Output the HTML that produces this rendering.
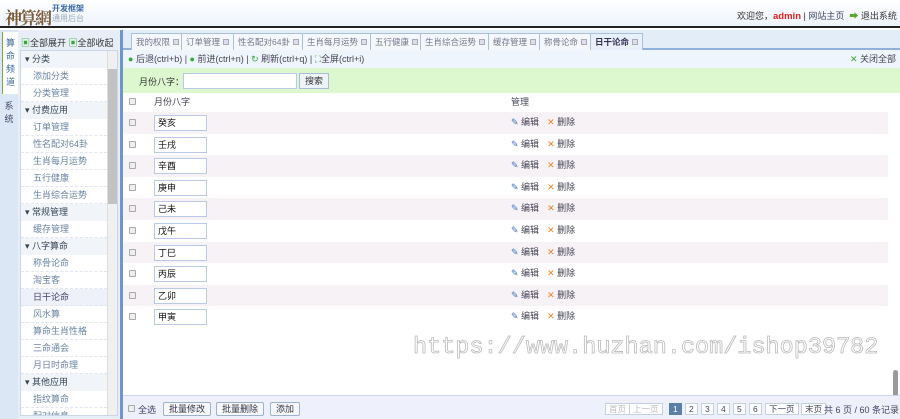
<!DOCTYPE html>
<html><head><meta charset="utf-8"><style>
*{margin:0;padding:0;box-sizing:border-box}
body{width:900px;height:419px;overflow:hidden;position:relative;font:9px "Liberation Sans","Noto Sans CJK SC",sans-serif;color:#333;background:#fff}
.a{position:absolute}
.hdr{left:0;top:0;width:900px;height:28px;background:linear-gradient(#fff,#eef4fb);border-bottom:2px solid #222}
.vt{left:0;top:30px;width:18px;height:389px;background:#dbe7f4}
.side{left:18px;top:30px;width:102px;height:389px;background:#e7eef8}
.tree{left:20px;top:50px;width:98px;height:366px;background:#fff;border:1px solid #c9d6e6;overflow:hidden}
.tree div{height:17px;line-height:17px;padding-left:12px;color:#6a84a6;border-bottom:1px dashed #e0e6ee}
.tree div.h{padding-left:4px;color:#345;background:#f1f5fa;border-bottom:none}
.sep{left:120px;top:30px;width:3px;height:389px;background:#6f96c8}
.tabs{left:123px;top:30px;width:777px;height:20px;background:#e3edf8;border-bottom:2px solid #8fb0d8}
.tab{position:absolute;top:3px;height:17px;line-height:16px;border:1px solid #a9c0dc;border-bottom:none;background:#f4f8fc;color:#778;padding:0 4px;font-size:8.5px;white-space:nowrap}
.tab i{display:inline-block;width:6px;height:6px;border:1px solid #aab;background:#dde;margin-left:3px;vertical-align:0}
.tb{left:123px;top:50px;width:777px;height:18px;background:#eff5fc;line-height:18px;color:#445}
.srch{left:123px;top:68px;width:777px;height:25px;background:#ddf8cf}
.th{left:123px;top:93px;width:777px;height:18px;background:#fff;line-height:18px}
.row{position:absolute;left:123px;width:765px;height:21.6px}
.cb{position:absolute;width:7px;height:7px;border:1px solid #aaa;border-radius:1px;background:#eee}
.inp{position:absolute;left:31px;top:3px;width:53px;height:16px;border:1px solid #b9c9e6;background:#fff;line-height:14px;padding-left:3px;color:#111}
.ops{position:absolute;left:388px;top:0;line-height:21px;color:#445}
.ops b{color:#3b74c4;font-weight:normal}
.ops em{color:#f08020;font-style:normal;margin-left:8px}
.bot{left:123px;top:395px;width:777px;height:24px;background:#eef0fb;border-top:1px solid #cdd6ee}
.btn{position:absolute;top:6px;height:14px;line-height:12px;border:1px solid #9db2d0;border-radius:2px;background:#f6f8fc;padding:0 5px;color:#334}
.pg{position:absolute;top:7px;height:12px;line-height:11px;border:1px solid #c3d0e5;background:#fff;padding:0 3px;color:#446;font-size:8.5px}
</style></head><body>
<div class="a hdr">
 <div class="a" style="left:5px;top:4px;font:bold 17px 'Noto Serif CJK SC',serif;color:#7a5a3a;letter-spacing:-2px">神算網</div>
 <div class="a" style="left:52px;top:3px;font-size:8px;color:#3a6ab0;font-weight:bold">开发框架</div>
 <div class="a" style="left:52px;top:13px;font-size:8px;color:#9ab">通用后台</div>
 <div class="a" style="left:737px;top:9px;color:#333">欢迎您，<b style="color:#d22;font-size:9.5px">admin</b> | <span style="color:#446">网站主页</span> &nbsp;<span style="color:#5a3">➡</span> 退出系统</div>
</div>
<div class="a vt">
 <div class="a" style="left:2px;top:2px;width:16px;height:62px;background:#fff;border-left:1px solid #7a4;color:#3a6a9a;font-size:9px;line-height:13px;text-align:center;padding-top:5px">算<br>命<br>频<br>道</div>
 <div class="a" style="left:2px;top:70px;width:14px;color:#446;line-height:13px;text-align:center">系<br>统</div>
</div>
<div class="a side">
 <div class="a" style="left:3px;top:6px;color:#333;white-space:nowrap"><span style="color:#3a3;font-weight:bold">▣</span>全部展开 <span style="color:#3a3;font-weight:bold">▣</span>全部收起</div>
</div>
<div class="a tree">
 <div class="h">▾ 分类</div><div>添加分类</div><div>分类管理</div>
 <div class="h">▾ 付费应用</div><div>订单管理</div><div>性名配对64卦</div><div>生肖每月运势</div><div>五行健康</div><div>生肖综合运势</div>
 <div class="h">▾ 常规管理</div><div>缓存管理</div>
 <div class="h">▾ 八字算命</div><div>称骨论命</div><div>淘宝客</div><div style="background:#eef0fa;color:#446">日干论命</div><div>风水算</div><div>算命生肖性格</div><div>三命通会</div><div>月日时命理</div>
 <div class="h">▾ 其他应用</div><div>指纹算命</div><div>配对信息</div>
 <div class="a" style="left:86px;top:0;width:11px;height:366px;background:#f0f0f0;border-left:1px solid #ddd;padding:0;border-bottom:none"></div>
 <div class="a" style="left:87px;top:18px;width:9px;height:135px;background:#c2c2c2;padding:0;border:none"></div>
</div>
<div class="a sep"></div>
<div class="a tabs">
 <div class="tab" style="left:8px">我的权限<i></i></div>
 <div class="tab" style="left:58px">订单管理<i></i></div>
 <div class="tab" style="left:110px">性名配对64卦<i></i></div>
 <div class="tab" style="left:179px">生肖每月运势<i></i></div>
 <div class="tab" style="left:247px">五行健康<i></i></div>
 <div class="tab" style="left:297px">生肖综合运势<i></i></div>
 <div class="tab" style="left:365px">缓存管理<i></i></div>
 <div class="tab" style="left:416px">称骨论命<i></i></div>
 <div class="tab" style="left:467px;background:#e7f0fb;color:#335;font-weight:bold">日干论命<i></i></div>
</div>
<div class="a tb">
 <span style="margin-left:5px;color:#3a3">●</span> 后退(ctrl+b) | <span style="color:#3a3">●</span> 前进(ctrl+n) | <span style="color:#3a3">↻</span> 刷新(ctrl+q) | <span style="color:#3a3">⛶</span>全屏(ctrl+i)
 <span class="a" style="right:4px;top:0"><span style="color:#3a3">✕</span> 关闭全部</span>
</div>
<div class="a srch">
 <div class="a" style="left:16px;top:7px">月份八字：</div>
 <div class="a" style="left:60px;top:5px;width:114px;height:16px;background:#fff;border:1px solid #b9c9e6"></div>
 <div class="a" style="left:176px;top:5px;width:30px;height:16px;border:1px solid #a9bbd6;background:#eef3fa;line-height:14px;text-align:center">搜索</div>
</div>
<div class="a th">
 <span class="cb" style="left:6px;top:5px"></span>
 <span class="a" style="left:31px;top:0;color:#445">月份八字</span>
 <span class="a" style="left:388px;top:0;color:#445">管理</span>
</div>
<div class="row" style="top:112px;background:#f7f2f6"><span class="cb" style="left:6px;top:7px"></span><div class="inp">癸亥</div><div class="ops"><b>✎</b> 编辑<em>✕</em> 删除</div></div>
<div class="row" style="top:133.6px"><span class="cb" style="left:6px;top:7px"></span><div class="inp">壬戌</div><div class="ops"><b>✎</b> 编辑<em>✕</em> 删除</div></div>
<div class="row" style="top:155.2px;background:#f7f2f6"><span class="cb" style="left:6px;top:7px"></span><div class="inp">辛酉</div><div class="ops"><b>✎</b> 编辑<em>✕</em> 删除</div></div>
<div class="row" style="top:176.8px"><span class="cb" style="left:6px;top:7px"></span><div class="inp">庚申</div><div class="ops"><b>✎</b> 编辑<em>✕</em> 删除</div></div>
<div class="row" style="top:198.4px;background:#f7f2f6"><span class="cb" style="left:6px;top:7px"></span><div class="inp">己未</div><div class="ops"><b>✎</b> 编辑<em>✕</em> 删除</div></div>
<div class="row" style="top:220px"><span class="cb" style="left:6px;top:7px"></span><div class="inp">戊午</div><div class="ops"><b>✎</b> 编辑<em>✕</em> 删除</div></div>
<div class="row" style="top:241.6px;background:#f7f2f6"><span class="cb" style="left:6px;top:7px"></span><div class="inp">丁巳</div><div class="ops"><b>✎</b> 编辑<em>✕</em> 删除</div></div>
<div class="row" style="top:263.2px"><span class="cb" style="left:6px;top:7px"></span><div class="inp">丙辰</div><div class="ops"><b>✎</b> 编辑<em>✕</em> 删除</div></div>
<div class="row" style="top:284.8px;background:#f7f2f6"><span class="cb" style="left:6px;top:7px"></span><div class="inp">乙卯</div><div class="ops"><b>✎</b> 编辑<em>✕</em> 删除</div></div>
<div class="row" style="top:306.4px"><span class="cb" style="left:6px;top:7px"></span><div class="inp">甲寅</div><div class="ops"><b>✎</b> 编辑<em>✕</em> 删除</div></div>
<div class="a" style="left:413px;top:334px;font:23.5px 'Liberation Mono',monospace;color:#fff;-webkit-text-stroke:0.8px #bbb;white-space:nowrap">https://www.huzhan.com/ishop39782</div>
<div class="a" style="left:893px;top:370px;width:5px;height:48px;background:#999;border-radius:3px"></div>
<div class="a" style="left:893px;top:398px;width:5px;height:18px;background:#4c4;border-radius:3px"></div>
<div class="a bot">
 <span class="cb" style="left:5px;top:9px"></span><span class="a" style="left:15px;top:7px;color:#446">全选</span>
 <div class="btn" style="left:40px">批量修改</div>
 <div class="btn" style="left:93px">批量删除</div>
 <div class="btn" style="left:147px">添加</div>
 <div class="pg" style="left:482px;color:#bbb">首页</div>
 <div class="pg" style="left:506px;color:#bbb">上一页</div>
 <div class="pg" style="left:546px;background:#5a80a8;color:#fff;border-color:#5a80a8">1</div>
 <div class="pg" style="left:562px">2</div>
 <div class="pg" style="left:578px">3</div>
 <div class="pg" style="left:594px">4</div>
 <div class="pg" style="left:610px">5</div>
 <div class="pg" style="left:626px">6</div>
 <div class="pg" style="left:642px">下一页</div>
 <div class="pg" style="left:678px">末页</div>
 <span class="a" style="left:701px;top:7px;color:#446;white-space:nowrap">共 6 页 / 60 条记录</span>
</div>
</body></html>
